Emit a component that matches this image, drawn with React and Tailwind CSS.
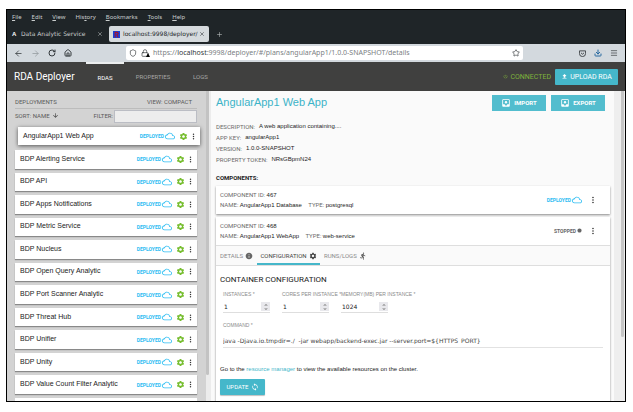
import React from "react";
import {
  MdSettings, MdMoreVert, MdCloudQueue, MdInfo, MdDirectionsRun, MdLoop, MdMoveToInbox,
  MdArrowDownward, MdFileUpload, MdUnfoldMore, MdPowerSettingsNew, MdCircle,
} from "react-icons/md";
import { ArrowLeft, ArrowRight, RotateCw, House, Shield, Lock, Star, Download, Menu, X, Plus } from "lucide-react";

const menus = ["File", "Edit", "View", "History", "Bookmarks", "Tools", "Help"];
const accel = { History: 3 };
const deployments = [
  "BDP Alerting Service",
  "BDP API",
  "BDP Apps Notifications",
  "BDP Metric Service",
  "BDP Nucleus",
  "BDP Open Query Analytic",
  "BDP Port Scanner Analytic",
  "BDP Threat Hub",
  "BDP Unifier",
  "BDP Unity",
  "BDP Value Count Filter Analytic",
];
const facts = [
  ["DESCRIPTION:", "A web application containing...."],
  ["APP KEY:", "angularApp1"],
  ["VERSION:", "1.0.0-SNAPSHOT"],
  ["PROPERTY TOKEN:", "NRsGBpmN24"],
];

function MenuBar() {
  return (
    <nav className="flex h-[14px] items-center gap-[10px] pl-[5px] font-['Noto_Sans',sans-serif] text-[6px] leading-[8px] text-[#c9cdcd]">
      {menus.map((m) => {
        const i = accel[m] || 0;
        return (
          <button key={m} type="button" className="block">
            {m.slice(0, i)}
            <span className="underline">{m[i]}</span>
            {m.slice(i + 1)}
          </button>
        );
      })}
    </nav>
  );
}

function TabStrip() {
  return (
    <div className="flex h-[20px] items-center font-['DejaVu_Sans',sans-serif] text-[6px] leading-[8px]">
      <div className="flex w-[102px] items-center pl-[5px] pr-[6px] text-[#c9cccc]">
        <b className="w-[9px] font-['Liberation_Sans',sans-serif] text-white">A</b>
        <span className="flex-1 whitespace-nowrap">Data Analytic Service</span>
        <button type="button" aria-label="Close Data Analytic Service"><X size={6} /></button>
      </div>
      <div className="flex h-[16px] w-[100px] items-center rounded-[2px] bg-[#d5dadd] pl-[4px] pr-[4px] text-[#22272a]">
        <svg viewBox="0 0 8 8" className="mr-[3px] h-[7px] w-[7px] shrink-0">
          <rect width="8" height="8" fill="#1742d8" />
          <path d="M2.500 7.500V1.500h2.500l1 1.500L4.500 4.500l1.500 3" fill="none" stroke="#a8132c" strokeWidth="1.300" />
        </svg>
        <span className="flex-1 whitespace-nowrap">localhost:9998/deployer/</span>
        <button type="button" aria-label="Close deployer"><X size={6} /></button>
      </div>
      <button type="button" aria-label="New tab" className="ml-[7px] text-[#b9bdbd]"><Plus size={7} /></button>
    </div>
  );
}

function Toolbar() {
  return (
    <div className="flex h-[18px] items-center bg-[#d3d9de] px-[7px] text-[#33383b]">
      <div className="flex w-[112px] items-center gap-[8px]">
        <button type="button" aria-label="Back"><ArrowLeft size={9} /></button>
        <button type="button" aria-label="Forward" className="text-[#91989c]"><ArrowRight size={9} /></button>
        <button type="button" aria-label="Reload"><RotateCw size={8} strokeWidth={3} /></button>
        <button type="button" aria-label="Home"><House size={8} strokeWidth={3} /></button>
      </div>
      <div className="flex h-[14px] min-w-0 flex-1 items-center rounded-[2px] bg-white px-[3px]">
        <Shield size={8} className="shrink-0" />
        <span className="relative ml-[4px] mr-[4px]">
          <Lock size={8} />
          <i className="absolute bottom-0 right-[-1px] h-0 w-0 border-x-[2px] border-b-[4px] border-x-transparent border-b-black" />
        </span>
        <div role="textbox" aria-label="Address" className="flex-1 whitespace-nowrap font-['Noto_Sans',sans-serif] text-[7px] leading-[10px] text-[#7b8083]">
          https://<span className="text-[#33383b]">localhost</span>:9998/deployer/#/plans/angularApp1/1.0.0-SNAPSHOT/details
        </div>
        <button type="button" aria-label="Bookmark"><Star size={8} /></button>
      </div>
      <div className="ml-[56px] flex items-center gap-[8px]">
        <button type="button" aria-label="Pocket">
          <svg viewBox="0 0 16 16" className="h-[7px] w-[7px]" fill="none" stroke="currentColor" strokeWidth="2">
            <path d="M1 2h14v6a7 7 0 0 1-14 0zM4.500 6.500 8 9.500l3.500-3" />
          </svg>
        </button>
        <button type="button" aria-label="Downloads" className="text-[#2668a0]"><Download size={8} strokeWidth={3} /></button>
        <button type="button" aria-label="Menu"><Menu size={8} /></button>
      </div>
    </div>
  );
}

function AppHeader() {
  return (
    <header className="flex h-[29px] items-center bg-[#40403f] pl-[7px] pr-[7px]">
      <h1 className="w-[72px] whitespace-nowrap text-[10px] leading-[12px] text-white">RDA Deployer</h1>
      <nav className="flex flex-1 self-stretch text-[6px] leading-[29px] text-[#a6a6a5]">
        <a href="#rdas" className="w-[38px] border-t-[2px] border-[#eceeef] text-center leading-[27px] text-white">RDAS</a>
        <a href="#properties" className="w-[58px] text-center">PROPERTIES</a>
        <a href="#logs" className="w-[37px] text-center">LOGS</a>
      </nav>
      <span className="mr-[4px] flex items-center gap-[2px] text-[7px] leading-[8px] text-[#7fb23c]">
        <MdPowerSettingsNew size={5} />CONNECTED
      </span>
      <button type="button" className="flex h-[16px] w-[63px] items-center justify-center gap-[2px] rounded-[1px] bg-[#45b7ca] text-[7px] leading-[8px] text-white">
        <MdFileUpload size={7} />UPLOAD RDA
      </button>
    </header>
  );
}

function Deployed() {
  return (
    <span className="flex items-center gap-[1px] text-[5px] font-bold leading-[8px] text-[#2dbdf2]">
      DEPLOYED<MdCloudQueue size={10} />
    </span>
  );
}

function DeploymentCard({ name, active }) {
  return (
    <li
      className={
        active
          ? "mb-[5px] ml-[3px] mr-[-3px] flex h-[18px] items-center bg-white pl-[5px] pr-[2px] shadow-[0_1px_4px_rgba(0,0,0,0.6)]"
          : "flex items-center bg-white pl-[5px] pr-[2px] shadow-[0_1px_1px_rgba(0,0,0,0.35)]"
      }
    >
      <a href="#deployment" className="flex-1 whitespace-nowrap pb-[1px] font-['Liberation_Sans',Arial,sans-serif] text-[7px] leading-[8px] text-[#222]">{name}</a>
      <Deployed />
      <button type="button" aria-label={"Settings for " + name} className="ml-[4px] text-[#76bd2e]"><MdSettings size={9} /></button>
      <button type="button" aria-label={"More for " + name} className="ml-[1px] text-[#333]"><MdMoreVert size={9} /></button>
    </li>
  );
}

function Sidebar() {
  return (
    <aside className="flex w-[204px] shrink-0 overflow-hidden bg-[#d3d3d3]">
      <div className="flex-1 pl-[8px] pr-[9px] pt-[5px] text-[6px] leading-[8px] text-[#5a5a5a]">
        <div className="flex h-[13px] items-center justify-between border-b border-[#bcbcbc] pr-[5px]">
          <h2>DEPLOYMENTS</h2>
          <span>VIEW: COMPACT</span>
        </div>
        <div className="flex h-[15px] items-center">
          <span className="flex flex-1 items-center whitespace-nowrap pb-[2px]">SORT: NAME <MdArrowDownward size={7} className="ml-[2px] text-[#333]" /></span>
          <label htmlFor="filter" className="mr-[1px] pb-[2px]">FILTER:</label>
          <input id="filter" className="h-[13px] w-[83px] border border-[#bbbdc4] bg-[#ededed]" />
        </div>
        <ul className="mt-[3px]"><DeploymentCard name="AngularApp1 Web App" active /></ul>
        <ul className="grid h-[244px] auto-rows-fr gap-[4px]">
          {deployments.map((d) => <DeploymentCard key={d} name={d} />)}
        </ul>
        <div className="mt-[4px] h-[12px] bg-white" />
      </div>
      <div className="w-[5px] bg-[#ececec]"><div className="h-[284px] w-[3px] rounded-b-[2px] bg-[#c3c3c3]" /></div>
    </aside>
  );
}

const value = "font-['Liberation_Sans',Arial,sans-serif] text-[#222]";

function Component({ id, name, type, status }) {
  return (
    <div className="flex h-[28px] items-center bg-white pb-[1px] pl-[4px] pr-[12px] text-[6px] leading-[10px] text-[#6a6a6a]">
      <div className="flex-1">
        <p>COMPONENT ID: <span className={value}>{id}</span></p>
        <p>NAME: <span className={value + " mr-[5px]"}>{name}</span> TYPE: <span className={value}>{type}</span></p>
      </div>
      {status}
      <button type="button" aria-label={"More for " + name} className="ml-[6px] text-[#333]"><MdMoreVert size={10} /></button>
    </div>
  );
}

function NumberField({ id, label, value: initial }) {
  return (
    <div className="w-[59px]">
      <label htmlFor={id} className="block whitespace-nowrap text-[5px] leading-[8px] text-[#8a8a8a]">{label}</label>
      <div className="mt-[3px] flex h-[12px] w-[47px] items-center border-b border-[#dedede]">
        <input id={id} defaultValue={initial} className="min-w-0 flex-1 pl-[1px] font-['DejaVu_Sans',sans-serif] text-[6px] leading-[8px] text-[#222]" />
        <button type="button" aria-label={"Step " + label} className="flex h-[9px] w-[9px] items-center justify-center bg-[#e8e8ec] text-[#777]"><MdUnfoldMore size={8} /></button>
      </div>
    </div>
  );
}

function Detail() {
  const action = "flex h-[16px] w-[54px] items-center justify-center gap-[3px] bg-[#52bdce] text-[6px] font-bold leading-[8px] text-white";
  return (
    <main className="flex min-w-0 flex-1 bg-[#fafafa]">
      <div className="min-w-0 flex-1 overflow-hidden pl-[5px] pr-[4px] pt-[4px]">
        <div className="flex items-start pr-[5px]">
          <h2 className="flex-1 font-['Liberation_Sans',Arial,sans-serif] text-[11px] leading-[14px] text-[#3cb3c8]">AngularApp1 Web App</h2>
          <button type="button" className={action}><MdMoveToInbox size={10} />IMPORT</button>
          <button type="button" className={action + " ml-[5px]"}><MdMoveToInbox size={10} />EXPORT</button>
        </div>
        <dl className="mt-[10px] text-[6px] leading-[11px]">
          {facts.map(([k, v]) => (
            <div key={k} className="flex gap-[4px]">
              <dt className="text-[#6a6a6a]">{k}</dt>
              <dd className={value}>{v}</dd>
            </div>
          ))}
        </dl>
        <h3 className="mt-[9px] text-[6px] font-bold leading-[8px] text-[#222]">COMPONENTS:</h3>
        <section className="mt-[4px] shadow-[0_1px_2px_rgba(0,0,0,0.45)]">
          <Component id="467" name="AngularApp1 Database" type="postgresql" status={<Deployed />} />
        </section>
        <section className="mt-[3px] bg-white shadow-[0_1px_2px_rgba(0,0,0,0.45)]">
          <Component
            id="468"
            name="AngularApp1 WebApp"
            type="web-service"
            status={<span className="flex items-center gap-[1px] text-[5px] font-bold text-[#666]">STOPPED<MdCircle size={5} /></span>}
          />
          <nav className="flex h-[21px] border-y border-[#dedede] bg-[#fafafa] text-[6px] leading-[8px] text-[#8a8a8a]">
            <a href="#details" className="flex w-[41px] items-center gap-[2px] pl-[4px]">DETAILS<MdInfo size={8} className="text-[#666]" /></a>
            <a href="#configuration" className="flex w-[63px] items-center justify-center gap-[2px] border-b-[2px] border-[#45b7ca] pt-[2px] text-[#444]">CONFIGURATION<MdSettings size={8} /></a>
            <a href="#runs" className="flex items-center gap-[2px] pl-[4px]">RUNS/LOGS<MdDirectionsRun size={8} className="text-[#555]" /></a>
          </nav>
          <form className="h-[200px] px-[4px] pt-[9px]">
            <h4 className="text-[8px] leading-[10px] text-[#222]">CONTAINER CONFIGURATION</h4>
            <div className="mt-[5px] flex pl-[3px] font-['Liberation_Sans',Arial,sans-serif]">
              <NumberField id="instances" label="INSTANCES *" value="1" />
              <NumberField id="cores" label="CORES PER INSTANCE *" value="1" />
              <NumberField id="memory" label="MEMORY(MB) PER INSTANCE *" value="1024" />
            </div>
            <div className="mt-[8px] px-[3px]">
              <label htmlFor="command" className="block font-['Liberation_Sans',Arial,sans-serif] text-[5px] leading-[8px] text-[#8a8a8a]">COMMAND *</label>
              <input
                id="command"
                defaultValue="java -Djava.io.tmpdir=./  -jar webapp/backend-exec.jar --server.port=${HTTPS_PORT}"
                className="mt-[5px] block h-[14px] w-full border-b border-[#e2e2e2] font-['DejaVu_Sans',sans-serif] text-[6px] leading-[8px] text-[#444]"
              />
            </div>
            <p className="mt-[17px] font-['Liberation_Sans',Arial,sans-serif] text-[6px] leading-[8px] text-[#222]">
              Go to the <a href="#resources" className="text-[#45b7ca]">resource manager</a> to view the available resources on the cluster.
            </p>
            <button type="button" className="mt-[6px] flex h-[16px] w-[45px] items-center justify-center gap-[2px] rounded-[1px] bg-[#45b7ca] text-[6px] leading-[8px] text-white shadow-[0_1px_1px_rgba(0,0,0,0.25)]">
              UPDATE<MdLoop size={8} />
            </button>
          </form>
        </section>
      </div>
      <div className="flex w-[11px] justify-end bg-[#eeeeee] pr-[1px]"><div className="h-[246px] w-[3px] rounded-b-[2px] bg-[#c6c6c6]" /></div>
    </main>
  );
}

export default function App() {
  return (
    <div className="h-screen bg-white pb-[10px] pl-[6px] pr-[7px] pt-[9px] font-[Roboto,Arial,sans-serif]">
      <div className="flex h-full flex-col overflow-hidden border border-black bg-[#1f2528]">
        <MenuBar />
        <TabStrip />
        <Toolbar />
        <AppHeader />
        <div className="flex min-h-0 flex-1">
          <Sidebar />
          <Detail />
        </div>
      </div>
    </div>
  );
}
